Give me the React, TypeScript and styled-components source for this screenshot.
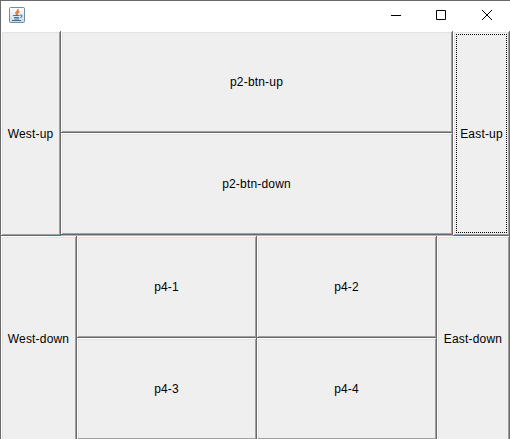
import React from "react";
import styled, { createGlobalStyle } from "styled-components";

const Global = createGlobalStyle`
  * { box-sizing: border-box; }
  body { margin: 0; background: #fff; overflow: hidden; }
`;

const Frame = styled.div`
  width: 510px;
  height: 439px;
  overflow: hidden;
  background: #fff;
  border-top: 1px solid #696969;
  border-left: 1px solid #696969;
  font-family: "Liberation Sans", Arial, sans-serif;
  font-size: 12px;
  letter-spacing: 0.18px;
  color: #000;
`;

const TitleBar = styled.header`
  height: 30px;
  display: flex;
  align-items: flex-start;
  justify-content: space-between;
  padding: 6px 0 0 8px;
`;

const Controls = styled.div`
  display: flex;
  gap: 35px;
  padding: 2px 17px 0 0;
`;

const Content = styled.main`
  display: grid;
  grid-template-rows: 205px 205px;
`;

const Band = styled.section<{ $columns: string }>`
  display: grid;
  grid-template-columns: ${(p) => p.$columns};
`;

const ButtonGrid = styled.div<{ $columns: number; $background?: string }>`
  display: grid;
  grid-template-columns: repeat(${(p) => p.$columns}, 1fr);
  grid-template-rows: 102px 102px;
  background: ${(p) => p.$background ?? "transparent"};
`;

const Button = styled.button<{ $focused?: boolean }>`
  display: flex;
  align-items: center;
  justify-content: center;
  min-width: 0;
  padding: ${(p) => (p.$focused ? "1px" : "0 1px 0 0")};
  border: 0;
  background: #efefef;
  box-shadow:
    inset -1px -1px #696969,
    inset 1px 1px #fff,
    inset -2px -2px #a0a0a0,
    inset 2px 2px #e3e3e3;
  font: inherit;
  line-height: 14px;
  letter-spacing: inherit;
  color: inherit;
  white-space: nowrap;
`;

const FocusArea = styled.span`
  position: relative;
  display: flex;
  align-items: center;
  justify-content: center;
  width: 51px;
  height: 199px;
`;

const FocusRing = styled.svg`
  position: absolute;
  inset: 0;
`;

const JavaIcon = () => (
  <svg width="16" height="16" viewBox="0 0 16 16">
    <defs>
      <linearGradient id="tile" x2="0" y2="1">
        <stop stopColor="#fff" />
        <stop offset="1" stopColor="#c9d9e5" />
      </linearGradient>
    </defs>
    <rect x=".5" y=".5" width="15" height="15" rx="1" fill="url(#tile)" stroke="#6f8ea5" />
    <path d="M9 2c1 2-3 2.500-2 4.500l1 1.500M10.500 4.500c-2 .5-2.500 1.500-1.500 3" fill="none" stroke="#e8762c" strokeWidth="1.400" />
    <path d="M4 8.500h6.500M5 10.500h5M5.500 12h4.500M3 13.500h9M11 8c2.500-.5 2.500 2 .3 2.500" fill="none" stroke="#3f7298" strokeWidth="1.100" />
  </svg>
);

const Glyph = ({ d }: { d: string }) => (
  <svg width="11" height="11" viewBox="0 0 11 11">
    <path d={d} fill="none" stroke="#000" />
  </svg>
);

export default function App() {
  return (
    <Frame>
      <Global />
      <TitleBar>
        <JavaIcon />
        <Controls>
          <Glyph d="M1 6.500H11" />
          <Glyph d="M.5 1.500H9.500V10.500H.5Z" />
          <Glyph d="M0 1L10 11M10 1L0 11" />
        </Controls>
      </TitleBar>
      <Content>
        <Band $columns="60px 392px 57px">
          <Button>West-up</Button>
          <ButtonGrid $columns={1} $background="#00ffff">
            <Button>p2-btn-up</Button>
            <Button>p2-btn-down</Button>
          </ButtonGrid>
          <Button $focused>
            <FocusArea>
              <FocusRing width="51" height="199">
                <rect x=".5" y=".5" width="50" height="198" fill="none" stroke="#000" strokeDasharray="1 1" strokeDashoffset=".5" shapeRendering="crispEdges" />
              </FocusRing>
              East-up
            </FocusArea>
          </Button>
        </Band>
        <Band $columns="76px 360px 73px">
          <Button>West-down</Button>
          <ButtonGrid $columns={2}>
            <Button>p4-1</Button>
            <Button>p4-2</Button>
            <Button>p4-3</Button>
            <Button>p4-4</Button>
          </ButtonGrid>
          <Button>East-down</Button>
        </Band>
      </Content>
    </Frame>
  );
}
